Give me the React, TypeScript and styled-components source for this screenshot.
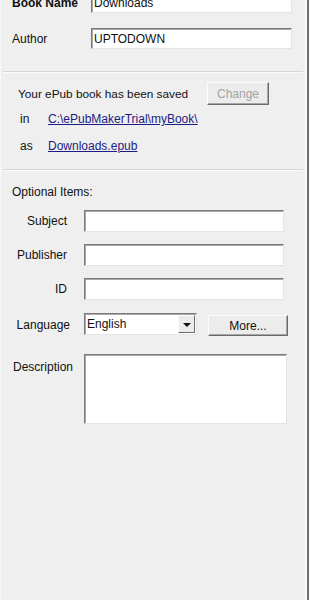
import React from "react";
import styled, { createGlobalStyle } from "styled-components";

const Global = createGlobalStyle`
  html, body { margin: 0; padding: 0; background: #efefef; }
  body { font-family: "Liberation Sans", Arial, sans-serif; font-size: 12px; color: #111; }
  * { box-sizing: border-box; }
`;

const Window = styled.div`
  width: 309px;
  height: 600px;
  overflow: hidden;
  background: #efefef;
  border-left: 1px solid #f9f9f9;
  border-right: 2px solid #6e6e6e;
  box-shadow: inset -2px 0 0 #fafafa;
  display: flex;
  flex-direction: column;
`;

const TopFields = styled.div`
  margin-top: -8px;
  padding-left: 11px;
  display: grid;
  grid-template-columns: 79px 201px;
  row-gap: 15px;
  align-items: center;
`;

const FieldLabel = styled.span<{ $bold?: boolean }>`
  font-weight: ${(p) => (p.$bold ? 700 : 400)};
  line-height: 16px;
`;

const TextBox = styled.div<{ $w: number; $h?: number }>`
  width: ${(p) => p.$w}px;
  height: ${(p) => p.$h ?? 21}px;
  background: #fff;
  border-top: 1px solid #7a7a7a;
  border-left: 1px solid #7a7a7a;
  border-bottom: 1px solid #e4e4e4;
  border-right: 1px solid #e4e4e4;
  box-shadow: inset 1px 1px 0 #a9a9a9;
  padding: 2px 0 0 2px;
  line-height: 16px;
  color: #111;
  white-space: nowrap;
  overflow: hidden;
`;

const Separator = styled.div<{ $top: number }>`
  margin: ${(p) => p.$top}px 4px 0 2px;
  height: 2px;
  border-top: 1px solid #d6d6d6;
  border-bottom: 1px solid #fbfbfb;
`;

const SavedRow = styled.div`
  margin-top: 9px;
  padding-left: 17px;
  display: grid;
  grid-template-columns: 189px 62px;
  align-items: center;
`;

const SavedText = styled.span`
  font-size: 11.8px;
`;

const Button = styled.div<{ $w: number; $h: number; $disabled?: boolean }>`
  width: ${(p) => p.$w}px;
  height: ${(p) => p.$h}px;
  background: #ececec;
  border-top: 1px solid #fdfdfd;
  border-left: 1px solid #fdfdfd;
  border-bottom: 1px solid #6a6a6a;
  border-right: 1px solid #6a6a6a;
  box-shadow: inset -1px -1px 0 #a6a6a6;
  display: flex;
  align-items: center;
  justify-content: center;
  color: ${(p) => (p.$disabled ? "#a3a3a3" : "#111")};
`;

const PathRow = styled.div<{ $top: number }>`
  margin-top: ${(p) => p.$top}px;
  padding-left: 19px;
  height: 20px;
  display: grid;
  grid-template-columns: 28px auto;
  align-items: center;
`;

const Link = styled.a`
  color: #1c1c84;
  text-decoration: underline;
  justify-self: start;
`;

const SectionTitle = styled.div`
  margin-top: 13px;
  padding-left: 11px;
  line-height: 16px;
`;

const OptRow = styled.div<{ $top: number; $align?: string }>`
  margin-top: ${(p) => p.$top}px;
  padding-left: 12px;
  display: grid;
  grid-template-columns: 71px auto;
  align-items: ${(p) => p.$align ?? "center"};
`;

const OptLabel = styled.span<{ $right?: number; $left?: boolean; $pt?: number }>`
  text-align: ${(p) => (p.$left ? "left" : "right")};
  padding-right: ${(p) => p.$right ?? 17}px;
  padding-top: ${(p) => p.$pt ?? 0}px;
  line-height: 16px;
`;

const Controls = styled.div`
  display: flex;
  align-items: flex-start;
  gap: 11px;
`;

const Combo = styled(TextBox)`
  position: relative;
  display: flex;
  justify-content: space-between;
  padding: 0 0 0 2px;
  align-items: stretch;
`;

const ComboText = styled.span`
  padding-top: 2px;
`;

const DropButton = styled.div`
  width: 17px;
  margin: 1px 1px 1px 0;
  background: #ececec;
  border-top: 1px solid #fdfdfd;
  border-left: 1px solid #fdfdfd;
  border-bottom: 1px solid #6a6a6a;
  border-right: 1px solid #6a6a6a;
  display: flex;
  align-items: center;
  justify-content: center;
`;

const Arrow = styled.span`
  width: 0;
  height: 0;
  border-left: 4px solid transparent;
  border-right: 4px solid transparent;
  border-top: 4px solid #111;
  margin-top: 1px;
`;

const MoreWrap = styled.div`
  margin-top: 2px;
`;

export default function App() {
  return (
    <>
      <Global />
      <Window>
        <TopFields>
          <FieldLabel $bold>Book Name</FieldLabel>
          <TextBox $w={201}>Downloads</TextBox>
          <FieldLabel>Author</FieldLabel>
          <TextBox $w={201}>UPTODOWN</TextBox>
        </TopFields>

        <Separator $top={22} />

        <SavedRow>
          <SavedText>Your ePub book has been saved</SavedText>
          <Button $w={62} $h={23} $disabled>
            Change
          </Button>
        </SavedRow>
        <PathRow $top={4}>
          <span>in</span>
          <Link>C:\ePubMakerTrial\myBook\</Link>
        </PathRow>
        <PathRow $top={7}>
          <span>as</span>
          <Link>Downloads.epub</Link>
        </PathRow>

        <Separator $top={13} />

        <SectionTitle>Optional Items:</SectionTitle>

        <OptRow $top={10}>
          <OptLabel>Subject</OptLabel>
          <TextBox $w={200} $h={22} />
        </OptRow>
        <OptRow $top={12}>
          <OptLabel>Publisher</OptLabel>
          <TextBox $w={200} $h={22} />
        </OptRow>
        <OptRow $top={12}>
          <OptLabel>ID</OptLabel>
          <TextBox $w={200} $h={22} />
        </OptRow>
        <OptRow $top={13}>
          <OptLabel $right={14}>Language</OptLabel>
          <Controls>
            <Combo $w={113} $h={22}>
              <ComboText>English</ComboText>
              <DropButton>
                <Arrow />
              </DropButton>
            </Combo>
            <MoreWrap>
              <Button $w={80} $h={21}>More...</Button>
            </MoreWrap>
          </Controls>
        </OptRow>
        <OptRow $top={18} $align="start">
          <OptLabel $left $pt={5}>Description</OptLabel>
          <TextBox $w={203} $h={70} />
        </OptRow>
      </Window>
    </>
  );
}
